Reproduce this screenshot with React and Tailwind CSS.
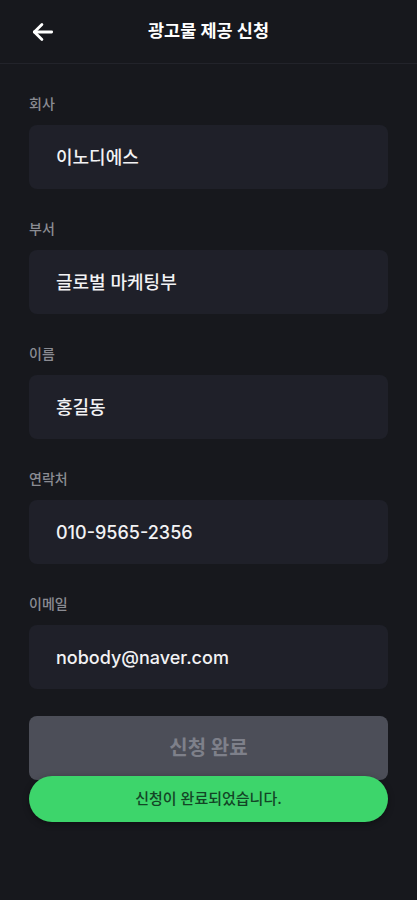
// Ad request form — completed state with success toast
const fields = [
  { label: '회사', value: '이노디에스' },
  { label: '부서', value: '글로벌 마케팅부' },
  { label: '이름', value: '홍길동' },
  { label: '연락처', value: '010-9565-2356' },
  { label: '이메일', value: 'nobody@naver.com' },
]

export default function App() {
  return (
    <div
      className="relative min-h-[900px] w-full bg-[#17181d] text-white"
      style={{ fontFamily: 'Inter, "Noto Sans CJK KR", sans-serif' }}
    >
      {/* Header */}
      <header className="relative flex h-16 items-center justify-center border-b border-[#22232a]">
        <button className="absolute left-[28px] top-1/2 -translate-y-1/2 p-0.5">
          <svg viewBox="0 0 24 24" className="h-[26px] w-[26px]" fill="none" stroke="#ffffff"
               strokeWidth="2.6" strokeLinecap="round" strokeLinejoin="round">
            <path d="M20 12H4" />
            <path d="M11 5l-7 7 7 7" />
          </svg>
        </button>
        <h1 className="text-[17.5px] font-bold text-white">광고물 제공 신청</h1>
      </header>

      {/* Form */}
      <div className="flex flex-col px-[29px] pt-[30px]">
        {fields.map((f) => (
          <div key={f.label} className="mb-[30px] flex flex-col gap-[11px]">
            <label className="text-[14px] leading-5 font-medium text-[#8b8c93]">{f.label}</label>
            <div className="flex h-16 items-center rounded-lg bg-[#1f2029] px-[27px]">
              <span className="text-[18px] font-medium text-[#f2f2f4]">{f.value}</span>
            </div>
          </div>
        ))}

        <div className="relative -mt-[3px]">
          <button className="flex h-16 w-full items-center justify-center rounded-lg bg-[#4c4e58] text-[20px] font-bold text-[#7e808a]">
            신청 완료
          </button>
          <div className="absolute left-0 right-0 top-[60px] flex h-[46px] items-center justify-center rounded-full bg-[#3dd56b] shadow-[0_2px_6px_rgba(0,0,0,0.35)]">
            <span className="text-[15px] font-medium text-[#134526]">신청이 완료되었습니다.</span>
          </div>
        </div>
      </div>
    </div>
  )
}
